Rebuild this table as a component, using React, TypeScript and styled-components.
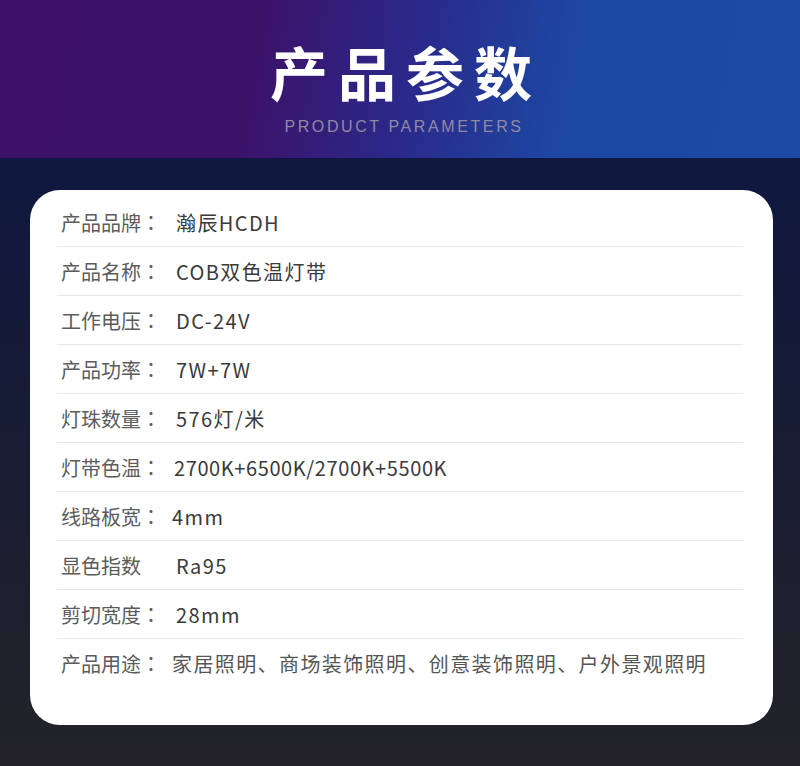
import styled, { createGlobalStyle } from "styled-components";

const GlobalStyle = createGlobalStyle`
    html, body {
        margin: 0;
        padding: 0;
    }
    body {
        font-family: "Noto Sans CJK SC", "Noto Sans", sans-serif;
    }
`;

const Page = styled.div`
    width: 800px;
    height: 766px;
    display: flex;
    flex-direction: column;
    background: linear-gradient(180deg, #0b1548 0%, #141a3a 40%, #232328 100%);
    overflow: hidden;
`;

const Header = styled.header`
    height: 158px;
    box-sizing: border-box;
    padding-top: 37px;
    display: flex;
    flex-direction: column;
    align-items: center;
    background: linear-gradient(100deg, #3d1168 0%, #3c1269 32%, #2a2a8c 52%, #1d47a2 70%, #1c4aa4 100%);
`;

const Title = styled.h1`
    margin: 0 0 0 12px;
    font-family: "Noto Sans CJK SC", sans-serif;
    font-size: 58px;
    font-weight: 700;
    line-height: 1.2;
    letter-spacing: 10px;
    color: #ffffff;
`;

const Subtitle = styled.div`
    margin: 11px 0 0 8px;
    font-family: "Liberation Sans", Arial, sans-serif;
    font-size: 16px;
    letter-spacing: 2.6px;
    color: #8f8aa2;
`;

const Card = styled.section`
    margin: 32px 27px 0 30px;
    height: 535px;
    box-sizing: border-box;
    padding: 8px 30px 0 27px;
    background: #ffffff;
    border-radius: 30px;
`;

const Row = styled.div<{ $last?: boolean }>`
    height: 48px;
    display: flex;
    align-items: center;
    padding-left: 4px;
    border-bottom: ${(p) => (p.$last ? "none" : "1px solid #e8e8e8")};
`;

const Label = styled.span`
    width: 115px;
    flex-shrink: 0;
    font-size: 20px;
    color: #5c5c5c;
`;

const Colon = styled.span`
    font-family: "Noto Sans CJK JP", "Noto Sans CJK SC", sans-serif;
`;

const Value = styled.span<{ $shift?: number; $tight?: boolean; $muted?: boolean }>`
    margin-left: ${(p) => p.$shift ?? 0}px;
    font-size: 20px;
    letter-spacing: ${(p) => (p.$tight ? "0.6px" : "1.4px")};
    color: ${(p) => (p.$muted ? "#555555" : "#3a3a3a")};
`;

type Spec = {
    label: string;
    value: string;
    shift?: number;
    tight?: boolean;
    muted?: boolean;
};

const specs: Spec[] = [
    { label: "产品品牌：", value: "瀚辰HCDH" },
    { label: "产品名称：", value: "COB双色温灯带" },
    { label: "工作电压：", value: "DC-24V" },
    { label: "产品功率：", value: "7W+7W" },
    { label: "灯珠数量：", value: "576灯/米" },
    { label: "灯带色温：", value: "2700K+6500K/2700K+5500K", shift: -2, tight: true },
    { label: "线路板宽：", value: "4mm", shift: -4 },
    { label: "显色指数", value: "Ra95" },
    { label: "剪切宽度：", value: "28mm" },
    { label: "产品用途：", value: "家居照明、商场装饰照明、创意装饰照明、户外景观照明", shift: -4, muted: true },
];

function LabelText({ text }: { text: string }) {
    if (!text.endsWith("：")) return <Label>{text}</Label>;
    return (
        <Label>
            {text.slice(0, -1)}
            <Colon>：</Colon>
        </Label>
    );
}

export default function App() {
    return (
        <>
            <GlobalStyle />
            <Page>
                <Header>
                    <Title>产品参数</Title>
                    <Subtitle>PRODUCT PARAMETERS</Subtitle>
                </Header>
                <Card>
                    {specs.map((s, i) => (
                        <Row key={s.label} $last={i === specs.length - 1}>
                            <LabelText text={s.label} />
                            <Value $shift={s.shift} $tight={s.tight} $muted={s.muted}>
                                {s.value}
                            </Value>
                        </Row>
                    ))}
                </Card>
            </Page>
        </>
    );
}
